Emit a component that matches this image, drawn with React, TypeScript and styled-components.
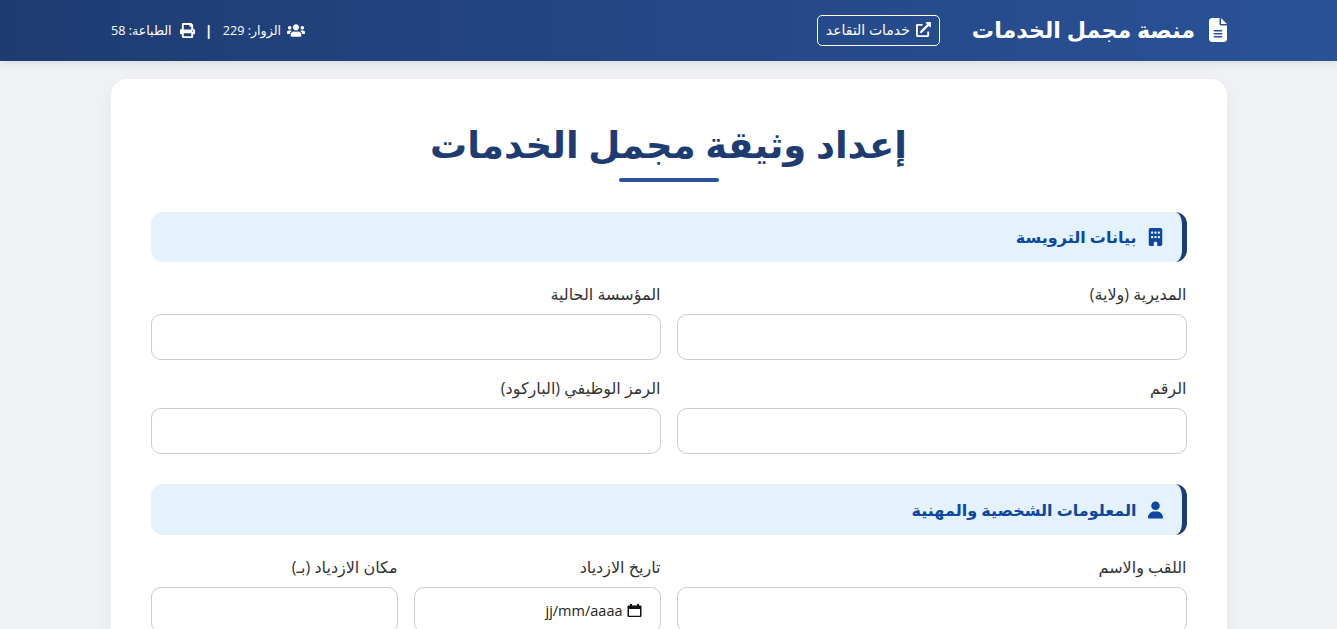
import React from "react";
import styled, { createGlobalStyle } from "styled-components";
import { FaUsers, FaPrint, FaExternalLinkAlt } from "react-icons/fa";
import { FaFileLines, FaBuilding, FaUser } from "react-icons/fa6";

const Global = createGlobalStyle`
  html, body { margin: 0; padding: 0; background: #f0f2f5; overflow: hidden; height: 629px; }
  * { box-sizing: border-box; }
  body { font-family: "Open Sans", "DejaVu Sans", sans-serif; }
`;

const Page = styled.div`direction: rtl;`;
const Header = styled.header`
  height: 61px;
  padding: 0 110px 0 111px;
  display: flex;
  align-items: center;
  justify-content: space-between;
  color: #fff;
  background: linear-gradient(90deg, #1e3c72, #2a5298);
  box-shadow: 0 2px 10px rgba(0,0,0,.1);
`;
const Brand = styled.div`display: flex; align-items: center; gap: 32px;`;
const Logo = styled.div`
  display: flex; align-items: center; gap: 14px;
  padding-bottom: 2px;
  font-size: 22.2px; font-weight: 700;
  svg { height: 24px; width: 18px; }
`;
const LinkButton = styled.a`
  display: flex; align-items: center; gap: 6px;
  height: 31px; padding: 0 8px 2px;
  border: 1px solid #fff; border-radius: 5px;
  font-size: 14px;
  svg { height: 15px; width: 15px; }
`;
const Stats = styled.div`display: flex; align-items: center; font-size: 12.6px; gap: 10px;`;
const Stat = styled.span<{ $gap: number }>`display: flex; align-items: center; gap: ${p => p.$gap}px;`;
const Separator = styled.span`font-size: 15px; font-weight: 700; line-height: 1;`;
const UsersIcon = styled(FaUsers)`width: 18px; height: 15px;`;
const PrintIcon = styled(FaPrint)`width: 15px; height: 15px;`;
const Card = styled.main`
  width: 1116px;
  margin: 18px auto 0;
  padding: 40px;
  background: #fff;
  border-radius: 16px;
  box-shadow: 0 5px 25px rgba(0,0,0,.05);
`;
const Title = styled.h1`
  position: relative;
  margin: 0 0 30px;
  height: 63px;
  text-align: center;
  font-size: 37px;
  line-height: 50px;
  font-weight: 700;
  color: #1e3c72;
  &::after {
    content: "";
    position: absolute;
    left: 50%;
    bottom: 0;
    width: 100px;
    height: 4px;
    margin-left: -50px;
    border-radius: 2px;
    background: #2a5298;
  }
`;
const SectionHead = styled.h2<{ $h: number }>`
  display: flex; align-items: center; gap: 11px;
  height: ${p => p.$h}px;
  margin: 0 0 22px;
  padding: 0 19px 0 18px;
  background: #e3f2fd;
  border-right: 5px solid #1e3c72;
  border-radius: 12px;
  color: #0d47a1;
  font-size: 16px;
  font-weight: 700;
  svg { height: 18px; width: 15px; }
`;
const Grid = styled.div`
  display: grid;
  grid-template-columns: repeat(4, 1fr);
  gap: 18px 16px;
  margin-bottom: 30px;
`;
const Field = styled.label<{ $span: number }>`
  display: flex; flex-direction: column;
  grid-column: span ${p => p.$span};
`;
const Label = styled.span`
  height: 20px; margin-bottom: 10px;
  font-size: 16px; line-height: 20px; color: #333;
`;
const Input = styled.input`
  width: 100%; height: 46px;
  border: 1px solid #ccc; border-radius: 10px;
  background: #fff; outline: none;
`;
const DateBox = styled.div`
  display: flex; align-items: center; gap: 4px;
  height: 46px; padding: 0 18px;
  border: 1px solid #ccc; border-radius: 10px;
  font-family: "Open Sans", sans-serif;
  font-size: 14.5px; color: #222;
`;
const DateText = styled.span`direction: ltr;`;

const CalendarIcon = () => (
  <svg width="15" height="15" viewBox="0 0 15 15" aria-hidden="true">
    <path d="M3 1h2v1.5h5V1h2v1.5h1.5a1 1 0 0 1 1 1V13a1 1 0 0 1-1 1h-12a1 1 0 0 1-1-1V3.5a1 1 0 0 1 1-1H3zM2 6v6.7h11V6z" fill="#111" />
  </svg>
);

export default function App() {
  return (
    <Page>
      <Global />
      <Header>
        <Brand>
          <Logo><FaFileLines /> منصة مجمل الخدمات</Logo>
          <LinkButton><FaExternalLinkAlt /> خدمات التقاعد</LinkButton>
        </Brand>
        <Stats>
          <Stat $gap={6}><UsersIcon /> الزوار: 229</Stat>
          <Separator>|</Separator>
          <Stat $gap={8}><PrintIcon /> الطباعة: 58</Stat>
        </Stats>
      </Header>
      <Card>
        <Title>إعداد وثيقة مجمل الخدمات</Title>
        <SectionHead $h={50}><FaBuilding /> بيانات الترويسة</SectionHead>
        <Grid>
          <Field $span={2}><Label>المديرية (ولاية)</Label><Input /></Field>
          <Field $span={2}><Label>المؤسسة الحالية</Label><Input /></Field>
          <Field $span={2}><Label>الرقم</Label><Input /></Field>
          <Field $span={2}><Label>الرمز الوظيفي (الباركود)</Label><Input /></Field>
        </Grid>
        <SectionHead $h={51}><FaUser /> المعلومات الشخصية والمهنية</SectionHead>
        <Grid>
          <Field $span={2}><Label>اللقب والاسم</Label><Input /></Field>
          <Field $span={1}><Label>تاريخ الازدياد</Label><DateBox><CalendarIcon /><DateText>jj/mm/aaaa</DateText></DateBox></Field>
          <Field $span={1}><Label>مكان الازدياد (بـ)</Label><Input /></Field>
        </Grid>
      </Card>
    </Page>
  );
}
